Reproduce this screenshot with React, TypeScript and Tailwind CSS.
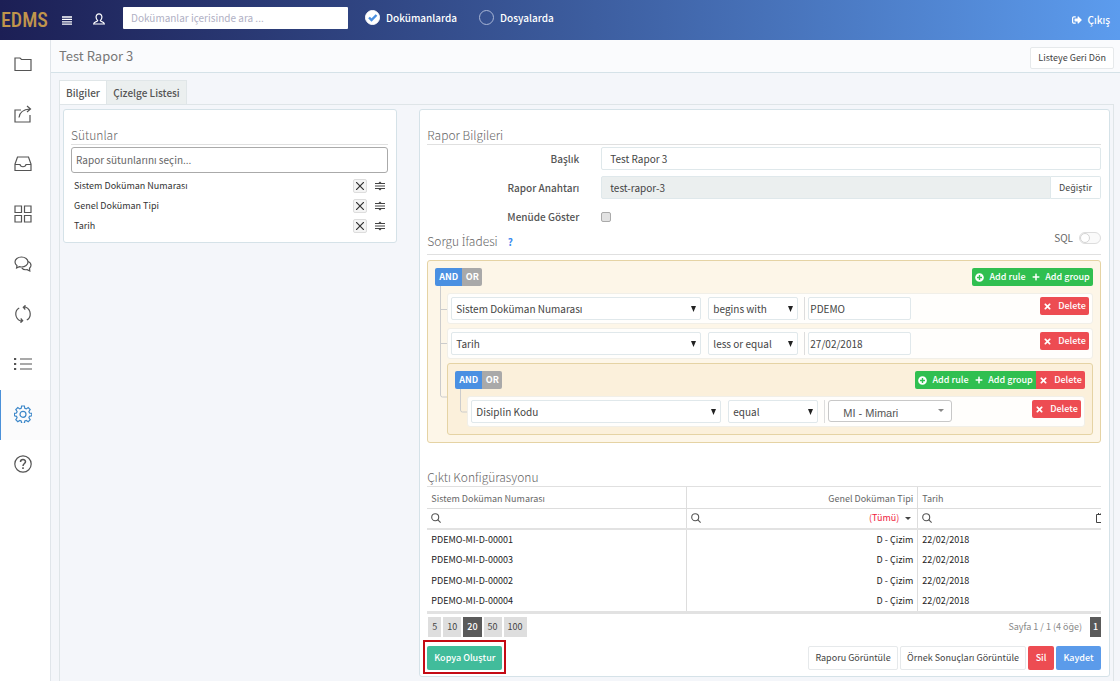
import { useState } from 'react'
import type { ReactNode } from 'react'
import { FaPlus, FaPlusCircle, FaSignOutAlt, FaTimes } from 'react-icons/fa'

const columns = ['Sistem Doküman Numarası', 'Genel Doküman Tipi', 'Tarih']

const results = ['PDEMO-MI-D-00001', 'PDEMO-MI-D-00003', 'PDEMO-MI-D-00002', 'PDEMO-MI-D-00004']

const pageSizes = [5, 10, 20, 50, 100]

const navItems: { label: string; icon: ReactNode }[] = [
  { label: 'Dosyalar', icon: <path d="M1 3h5l1.500 1.500H17v11H1z" /> },
  {
    label: 'Paylaş',
    icon: (
      <>
        <path d="M7 5H1v12h15v-7" />
        <path d="M5 12.500c.5-5 4-8 11-8.500M13 1l3.500 3-3.500 3" />
      </>
    ),
  },
  {
    label: 'Gelen Kutusu',
    icon: (
      <>
        <path d="M3.500 2h11L17 9v6.500H1V9z" />
        <path d="M1 9.500h5c.5 3 5.500 3 6 0h5" />
      </>
    ),
  },
  {
    label: 'Modüller',
    icon: <path d="M1 1h6.500v6.500H1zM10.500 1H17v6.500h-6.500zM1 10.500h6.500V17H1zM10.500 10.500H17V17h-6.500z" />,
  },
  {
    label: 'Mesajlar',
    icon: (
      <>
        <path d="M7.500 2C3.800 2 1 4.200 1 7c0 1.500.8 2.800 2 3.700L2.600 13l2.700-1.300c.7.200 1.400.3 2.200.3 3.700 0 6.500-2.200 6.500-5s-2.800-5-6.500-5z" />
        <path d="M14 6.500c1.800.6 3 2 3 3.800 0 1.100-.6 2.200-1.500 3l.3 2.700-2.600-1.400c-2.400.4-4.400-.3-5.400-1.800" />
      </>
    ),
  },
  {
    label: 'Yenile',
    icon: (
      <>
        <path d="M6 15.800C.6 13 .4 5.600 5.200 3M12 2.200c5.400 2.800 5.600 10.200.8 12.800" />
        <path d="M11.500.3L9.300 2.200l2 2.300M6.500 17.700l2.200-1.900-2-2.300M9.300 2.200H12M8.700 15.800H6" />
      </>
    ),
  },
  {
    label: 'Listeler',
    icon: (
      <>
        <path d="M6 4h12M6 9h12M6 14h12" />
        <path d="M0 4h2.200M0 9h2.200M0 14h2.200" strokeWidth="2" />
      </>
    ),
  },
  {
    label: 'Ayarlar',
    icon: (
      <>
        <path d="M7.600 1h2.800l.4 2.300 1.500.6 1.900-1.300 2 2-1.300 1.900.6 1.500 2.300.4v2.400l-2.300.5-.6 1.500 1.300 1.900-2 2-1.900-1.300-1.500.6-.4 2.300H7.600l-.4-2.300-1.500-.6-1.900 1.300-2-2 1.300-1.900-.6-1.500L.4 10.800V8.400L2.500 8l.6-1.500-1.300-1.900 2-2 1.900 1.300 1.500-.6z" />
        <circle cx="9" cy="9.300" r="3" />
      </>
    ),
  },
  {
    label: 'Yardım',
    icon: (
      <>
        <circle cx="9" cy="9" r="8.200" />
        <path d="M6.500 7c0-3.300 5-3.200 5-.3C11.500 8.500 9 8.500 9 11" strokeWidth="1.500" />
        <path d="M9 12.300v1.700" strokeWidth="1.600" />
      </>
    ),
  },
]

const defaultButton =
  'rounded-[2px] border border-[#e6e9eb] bg-white text-[9px] text-[#444] whitespace-nowrap'

function SectionTitle({ children, className = '' }: { children: ReactNode; className?: string }) {
  return (
    <div className={`flex items-center border-b border-[#e0e0e0] text-[#666] ${className}`}>{children}</div>
  )
}

function Caret({ className = '' }: { className?: string }) {
  return (
    <svg
      viewBox="0 0 6 6"
      preserveAspectRatio="none"
      className={`pointer-events-none absolute ${className}`}
      fill="currentColor"
    >
      <path d="M0 0h6L3 6z" />
    </svg>
  )
}

function SearchIcon() {
  return (
    <svg viewBox="0 0 10 10" className="size-[10px]" fill="none" stroke="#555" strokeWidth="1.100">
      <circle cx="4.200" cy="4.200" r="3.500" />
      <path d="M6.700 6.700L9.600 9.600" />
    </svg>
  )
}

function ConditionSwitch() {
  const [condition, setCondition] = useState('AND')
  return (
    <div className="flex h-[18px] overflow-hidden rounded-[2px] text-[9px] font-bold text-white">
      {['AND', 'OR'].map((value) => (
        <button
          key={value}
          onClick={() => setCondition(value)}
          className={`${value === 'AND' ? 'w-[27px]' : 'w-[20px]'} ${
            condition === value ? 'bg-[#4a90e2]' : 'bg-[#a9a9a9]'
          }`}
        >
          {value}
        </button>
      ))}
    </div>
  )
}

function DeleteButton({ className = '' }: { className?: string }) {
  return (
    <button
      className={`flex h-[18px] w-[49px] items-center justify-center gap-[6px] bg-[#ed4c52] text-[9px] font-medium text-white ${className}`}
    >
      <FaTimes size={9} />
      Delete
    </button>
  )
}

function GroupHeader({ nested = false }: { nested?: boolean }) {
  return (
    <div className="flex items-center justify-between">
      <ConditionSwitch />
      <div className="flex h-[18px] overflow-hidden rounded-[2px] text-[9px] font-medium text-white">
        <button className="flex w-[57px] items-center justify-center gap-[5px] bg-[#30bf50]">
          <FaPlusCircle size={9} />
          Add rule
        </button>
        <button className="flex w-[64px] items-center justify-center gap-[5px] bg-[#30bf50]">
          <FaPlus size={8} />
          Add group
        </button>
        {nested && <DeleteButton />}
      </div>
    </div>
  )
}

function SmallSelect({ label, value, className }: { label: string; value: string; className: string }) {
  return (
    <div className={`relative ${className}`}>
      <select
        aria-label={label}
        className="h-[23px] w-full appearance-none rounded-[2px] border border-[#e0e8eb] bg-white px-1 text-[10px] text-[#444]"
      >
        <option>{value}</option>
      </select>
      <Caret className="right-[5px] top-[9px] h-[6px] w-[5px] text-[#222]" />
    </div>
  )
}

function Rule({ field, operator, children }: { field: string; operator: string; children: ReactNode }) {
  return (
    <div className="flex h-[31px] items-start rounded-[3px] border border-[#f1efe8] bg-[#fffefc] px-[3px] pt-[3px]">
      <SmallSelect label="Alan" value={field} className="w-[250px]" />
      <SmallSelect label="Operatör" value={operator} className="ml-[7px] w-[90px]" />
      <div className="ml-[6px] flex h-[23px] border-l border-[#dddddd] pl-[3px]">{children}</div>
      <DeleteButton className="ml-auto rounded-[2px]" />
    </div>
  )
}

function ValueInput({ value }: { value: string }) {
  return (
    <input
      aria-label="Değer"
      defaultValue={value}
      className="h-[23px] w-[103px] rounded-[2px] border border-[#e0e8eb] bg-white px-px text-[10px] text-[#444]"
    />
  )
}

export default function App() {
  const [pageSize, setPageSize] = useState(20)

  return (
    <div className="flex min-h-screen flex-col bg-[#f4f6fa] font-['Noto_Sans_CJK_SC','Noto_Sans',sans-serif] text-[10px] leading-4 text-[#444]">
      <header className="flex h-10 items-center bg-linear-to-r from-[#1c1f55] via-[#3b5a9b] to-[#5c9cee] text-white">
        <div className="w-[62px] shrink-0 pl-px font-['Roboto_Condensed','Noto_Sans_CJK_SC',sans-serif] text-[20px] font-medium text-[#c0954c]">
          EDMS
        </div>
        <button aria-label="Menü">
          <svg viewBox="0 0 10 9" className="h-[9px] w-[10px]" stroke="white" strokeWidth="1.300">
            <path d="M0 1h10M0 3.400h10M0 5.800h10M0 8.200h10" />
          </svg>
        </button>
        <button aria-label="Profil" className="-mt-[3px] ml-[21px]">
          <svg viewBox="0 0 12 12" className="size-3" fill="none" stroke="white" strokeWidth="1.200">
            <path d="M4.700 7.600C2 5 3 .8 6 .8s4 4.200 1.300 6.800c.3 1.200 3.800.8 4.100 3.400H.6c.3-2.600 3.800-2.200 4.100-3.400z" />
          </svg>
        </button>
        <input
          type="text"
          aria-label="Ara"
          placeholder="Dokümanlar içerisinde ara ..."
          className="-mt-[5px] ml-[18px] h-[22px] w-[225px] rounded-[1px] bg-white px-2 text-[10px] text-[#555] placeholder:text-[#b0b0c4]"
        />
        <div className="-mt-[5px] flex items-center gap-[22px] pl-[17px] font-medium">
          <label className="flex items-center gap-[6px]">
            <span className="grid">
              <input
                type="radio"
                name="scope"
                defaultChecked
                className="peer col-start-1 row-start-1 size-[15px] appearance-none rounded-full border border-[#a9b6d6] checked:border-white checked:bg-white"
              />
              <svg
                viewBox="0 0 15 15"
                className="pointer-events-none invisible col-start-1 row-start-1 size-[15px] peer-checked:visible"
                fill="none"
                stroke="#4a8fe0"
                strokeWidth="2.400"
              >
                <path d="M4 7.500l2.500 2.500 5-5" />
              </svg>
            </span>
            Dokümanlarda
          </label>
          <label className="flex items-center gap-[6px]">
            <input
              type="radio"
              name="scope"
              className="size-[15px] appearance-none rounded-full border border-[#a9b6d6] checked:bg-white"
            />
            Dosyalarda
          </label>
        </div>
        <a href="#" className="ml-auto mr-[10px] flex items-center gap-[6px] font-medium">
          <FaSignOutAlt size={10} />
          Çıkış
        </a>
      </header>

      <div className="flex flex-1">
        <nav className="w-[51px] shrink-0 border-r border-[#e0e5ea] bg-white">
          {navItems.map(({ label, icon }) => (
            <a
              key={label}
              href="#"
              aria-label={label}
              className={`flex h-[50px] items-center border-l pb-[2px] pl-[13px] ${
                label === 'Ayarlar'
                  ? 'border-[#4a90d9] bg-[#fbfbfc] text-[#3c87c9]'
                  : 'border-transparent text-[#555]'
              }`}
            >
              <svg viewBox="0 0 18 18" className="size-[18px]" fill="none" stroke="currentColor" strokeWidth="1.200">
                {icon}
              </svg>
            </a>
          ))}
        </nav>

        <main className="flex min-w-0 flex-1 flex-col">
          <div className="flex h-[33px] items-center justify-between border-b border-[#d5e2e8] bg-[#fafbfd] pl-2 pr-[6px]">
            <h1 className="text-[13px] text-[#777]">Test Rapor 3</h1>
            <button className={`mt-[3px] h-[22px] px-[7px] ${defaultButton}`}>Listeye Geri Dön</button>
          </div>

          <div className="flex flex-1 flex-col pl-2 pr-[6px] pt-[7px]">
            <div role="tablist" className="flex font-medium text-[#555]">
              <button
                role="tab"
                aria-selected="true"
                className="h-[24px] w-[48px] border border-b-0 border-[#e0e6e8] bg-white"
              >
                Bilgiler
              </button>
              <button
                role="tab"
                aria-selected="false"
                className="h-[24px] w-[80px] border border-b-0 border-l-0 border-[#e0e6e8] bg-[#ebefef]"
              >
                Çizelge Listesi
              </button>
            </div>

            <div className="grid flex-1 grid-cols-[334fr_690fr] items-start gap-x-[22px] border border-b-0 border-[#dfe5e8] px-[3px] pb-1 pt-[4px]">
              <section className="rounded-[3px] border border-[#d5e2e8] bg-white pb-[6px] pl-[7px] pr-2 pt-4">
                <SectionTitle className="h-[19px]">
                  <h2 className="text-[12px] font-light">Sütunlar</h2>
                </SectionTitle>
                <input
                  aria-label="Rapor sütunları"
                  placeholder="Rapor sütunlarını seçin..."
                  className="mt-[2px] h-[26px] w-full rounded-[3px] border border-[#aaa] px-1 pb-[2px] text-[10px] placeholder:text-[#666]"
                />
                <ul className="mt-[3px] text-[9px] text-[#333]">
                  {columns.map((name) => (
                    <li key={name} className="flex h-[20px] items-center gap-2 px-[3px]">
                      <span className="flex-1">{name}</span>
                      <button
                        aria-label={`${name} sil`}
                        className="flex size-[14px] items-center justify-center rounded-[2px] border border-[#ddd] bg-[#f4f4f4]"
                      >
                        <svg viewBox="0 0 8 8" className="size-2" stroke="#333" strokeWidth="1.200">
                          <path d="M0 0l8 8M8 0L0 8" />
                        </svg>
                      </button>
                      <svg viewBox="0 0 10 10" className="size-[10px]" stroke="#444" fill="#444">
                        <path d="M0 2.500h10M0 5h10M0 7.500h10" strokeWidth="1" />
                        <path d="M3.500 2L5 .5 6.500 2zM3.500 8L5 9.500 6.500 8z" stroke="none" />
                      </svg>
                    </li>
                  ))}
                </ul>
              </section>

              <section className="rounded-[3px] border border-[#d5e2e8] bg-white pb-[6px] pl-[7px] pr-2 pt-4">
                <SectionTitle className="h-[19px]">
                  <h2 className="text-[12px] font-light">Rapor Bilgileri</h2>
                </SectionTitle>
                <div className="mt-[2px] grid grid-cols-[152fr_500fr] items-center gap-x-[22px] gap-y-[6px]">
                  <label htmlFor="title" className="text-right font-medium text-[#555]">
                    Başlık
                  </label>
                  <input
                    id="title"
                    defaultValue="Test Rapor 3"
                    className="h-[23px] rounded-[2px] border border-[#dfe8eb] px-2"
                  />
                  <label htmlFor="key" className="text-right font-medium text-[#555]">
                    Rapor Anahtarı
                  </label>
                  <div className="flex">
                    <input
                      id="key"
                      readOnly
                      value="test-rapor-3"
                      className="h-[23px] min-w-0 flex-1 rounded-l-[2px] border border-[#dfe8eb] bg-[#ebefef] px-2"
                    />
                    <button className="w-[50px] rounded-r-[2px] border border-l-0 border-[#dfe8eb] text-[9px]">
                      Değiştir
                    </button>
                  </div>
                  <label htmlFor="menu" className="text-right font-medium leading-6 text-[#555]">
                    Menüde Göster
                  </label>
                  <input
                    id="menu"
                    type="checkbox"
                    className="size-[10px] appearance-none rounded-[2px] border border-[#aaa] bg-[#e2e2e2] checked:bg-[#4a90e2]"
                  />
                </div>

                <SectionTitle className="h-[26px] justify-between">
                  <div className="flex items-center gap-[10px]">
                    <h2 className="text-[12px] font-light">
                      Sorgu <span className="font-['Noto_Sans']">İ</span>fadesi
                    </h2>
                    <a href="#" className="font-bold text-[#3d8bf0]">
                      ?
                    </a>
                  </div>
                  <label className="mb-[8px] flex items-center gap-[6px]">
                    SQL
                    <span className="flex h-[12px] w-[22px] rounded-full border border-[#ddd] bg-[#fafafa]">
                      <input
                        type="checkbox"
                        role="switch"
                        className="size-[10px] appearance-none rounded-full border border-[#d5d5d5] bg-white checked:translate-x-[10px]"
                      />
                    </span>
                  </label>
                </SectionTitle>

                <div className="mt-[5px] rounded-[3px] border border-[#e5d3a4] bg-[#fdf6e8] p-[7px]">
                  <GroupHeader />
                  <div className="flex pt-[7px]">
                    <div className="relative w-[12px] shrink-0">
                      <svg className="absolute -top-[7px] left-[5px] h-[113px] w-[7px]" fill="none" stroke="#ccc">
                        <path d="M.5 0v109q0 2 2 2H7M.5 23.500H7M.5 57.500H7" />
                      </svg>
                    </div>
                    <div className="flex min-w-0 flex-1 flex-col gap-1">
                      <Rule field="Sistem Doküman Numarası" operator="begins with">
                        <ValueInput value="PDEMO" />
                      </Rule>
                      <Rule field="Tarih" operator="less or equal">
                        <ValueInput value="27/02/2018" />
                      </Rule>
                      <div className="rounded-[3px] border border-[#e5d3a4] bg-[#fbf0db] p-[7px]">
                        <GroupHeader nested />
                        <div className="flex pt-[7px]">
                          <div className="relative w-[12px] shrink-0">
                            <svg className="absolute -top-[7px] left-[5px] h-[25px] w-[7px]" fill="none" stroke="#ccc">
                              <path d="M.5 0v21q0 2 2 2H7" />
                            </svg>
                          </div>
                          <div className="min-w-0 flex-1">
                            <Rule field="Disiplin Kodu" operator="equal">
                              <div className="relative">
                                <select
                                  aria-label="Değer"
                                  className="h-[22px] w-[124px] appearance-none rounded-[3px] border border-[#c8c8c8] bg-white pl-[14px] pt-[3px] font-['Liberation_Sans',sans-serif] text-[11px] text-[#555]"
                                >
                                  <option>MI - Mimari</option>
                                </select>
                                <Caret className="right-[8px] top-[9px] h-[3px] w-[6px] text-[#888]" />
                              </div>
                            </Rule>
                          </div>
                        </div>
                      </div>
                    </div>
                  </div>
                </div>

                <SectionTitle className="mt-6 h-[20px]">
                  <h2 className="text-[12px] font-light">Çıktı Konfigürasyonu</h2>
                </SectionTitle>
                <div className="border-b-3 border-[#e2e2e2]">
                  <table className="w-full table-fixed text-[9px] text-[#222]">
                    <thead className="text-[#666]">
                      <tr className="h-[21px] border-b border-[#ddd]">
                        <th className="w-[38.4%] border-r border-[#ddd] pl-1 pt-1 text-left font-normal">
                          Sistem Doküman Numarası
                        </th>
                        <th className="w-[34.4%] border-r border-[#ddd] pr-1 pt-1 text-right font-normal">
                          Genel Doküman Tipi
                        </th>
                        <th className="pl-1 pt-1 text-left font-normal">Tarih</th>
                      </tr>
                      <tr className="h-[21px] border-b-2 border-[#e2e2e2]">
                        <td className="border-r border-[#ddd] pl-1">
                          <SearchIcon />
                        </td>
                        <td className="border-r border-[#ddd] px-1">
                          <div className="flex items-center">
                            <SearchIcon />
                            <span className="ml-auto text-[#f0203c]">(Tümü)</span>
                            <svg viewBox="0 0 6 3" className="ml-[6px] mr-[2px] h-[3px] w-[6px]" fill="#444">
                              <path d="M0 0h6L3 3z" />
                            </svg>
                          </div>
                        </td>
                        <td className="pl-1">
                          <div className="flex items-center justify-between">
                            <SearchIcon />
                            <svg viewBox="0 0 5 10" className="h-[10px] w-[5px]" fill="none" stroke="#444">
                              <path d="M5 1.500H.5v8H5M2.500 0v2M4 1h1" />
                            </svg>
                          </div>
                        </td>
                      </tr>
                    </thead>
                    <tbody>
                      {results.map((code) => (
                        <tr key={code} className="h-[20px] odd:h-[21px]">
                          <td className="border-r border-[#ddd] pl-1">{code}</td>
                          <td className="border-r border-[#ddd] pr-1 text-right">D - Çizim</td>
                          <td className="pl-1">22/02/2018</td>
                        </tr>
                      ))}
                    </tbody>
                  </table>
                </div>

                <div className="mt-[3px] flex h-[20px] items-center justify-between text-[9px]">
                  <div className="flex h-full gap-[2px] pl-px">
                    {pageSizes.map((size) => (
                      <button
                        key={size}
                        onClick={() => setPageSize(size)}
                        className={`px-1 ${
                          size === pageSize ? 'bg-[#5a5a5a] font-medium text-white' : 'bg-[#dedede] text-[#444]'
                        }`}
                      >
                        {size}
                      </button>
                    ))}
                  </div>
                  <div className="flex h-full items-center gap-2 text-[#888]">
                    Sayfa 1 / 1 (4 öğe)
                    <button className="h-full w-[11px] bg-[#5a5a5a] font-medium text-white">1</button>
                  </div>
                </div>

                <div className="mt-[9px] flex h-[24px] items-stretch gap-[2px] text-[9px]">
                  <div className="relative mr-auto flex">
                    <button className="w-[75px] rounded-[2px] bg-[#41bc9b] font-medium text-white">
                      Kopya Oluştur
                    </button>
                    <div className="pointer-events-none absolute -inset-x-[4px] -bottom-[4px] -top-[6px] border-2 border-[#c40a14]" />
                  </div>
                  <button className={`w-[90px] ${defaultButton}`}>Raporu Görüntüle</button>
                  <button className={`w-[126px] ${defaultButton}`}>Örnek Sonuçları Görüntüle</button>
                  <button className="w-[26px] rounded-[2px] bg-[#ed4c52] font-medium text-white">Sil</button>
                  <button className="w-[45px] rounded-[2px] bg-[#5b9bea] font-medium text-white">Kaydet</button>
                </div>
              </section>
            </div>
          </div>
        </main>
      </div>
    </div>
  )
}
